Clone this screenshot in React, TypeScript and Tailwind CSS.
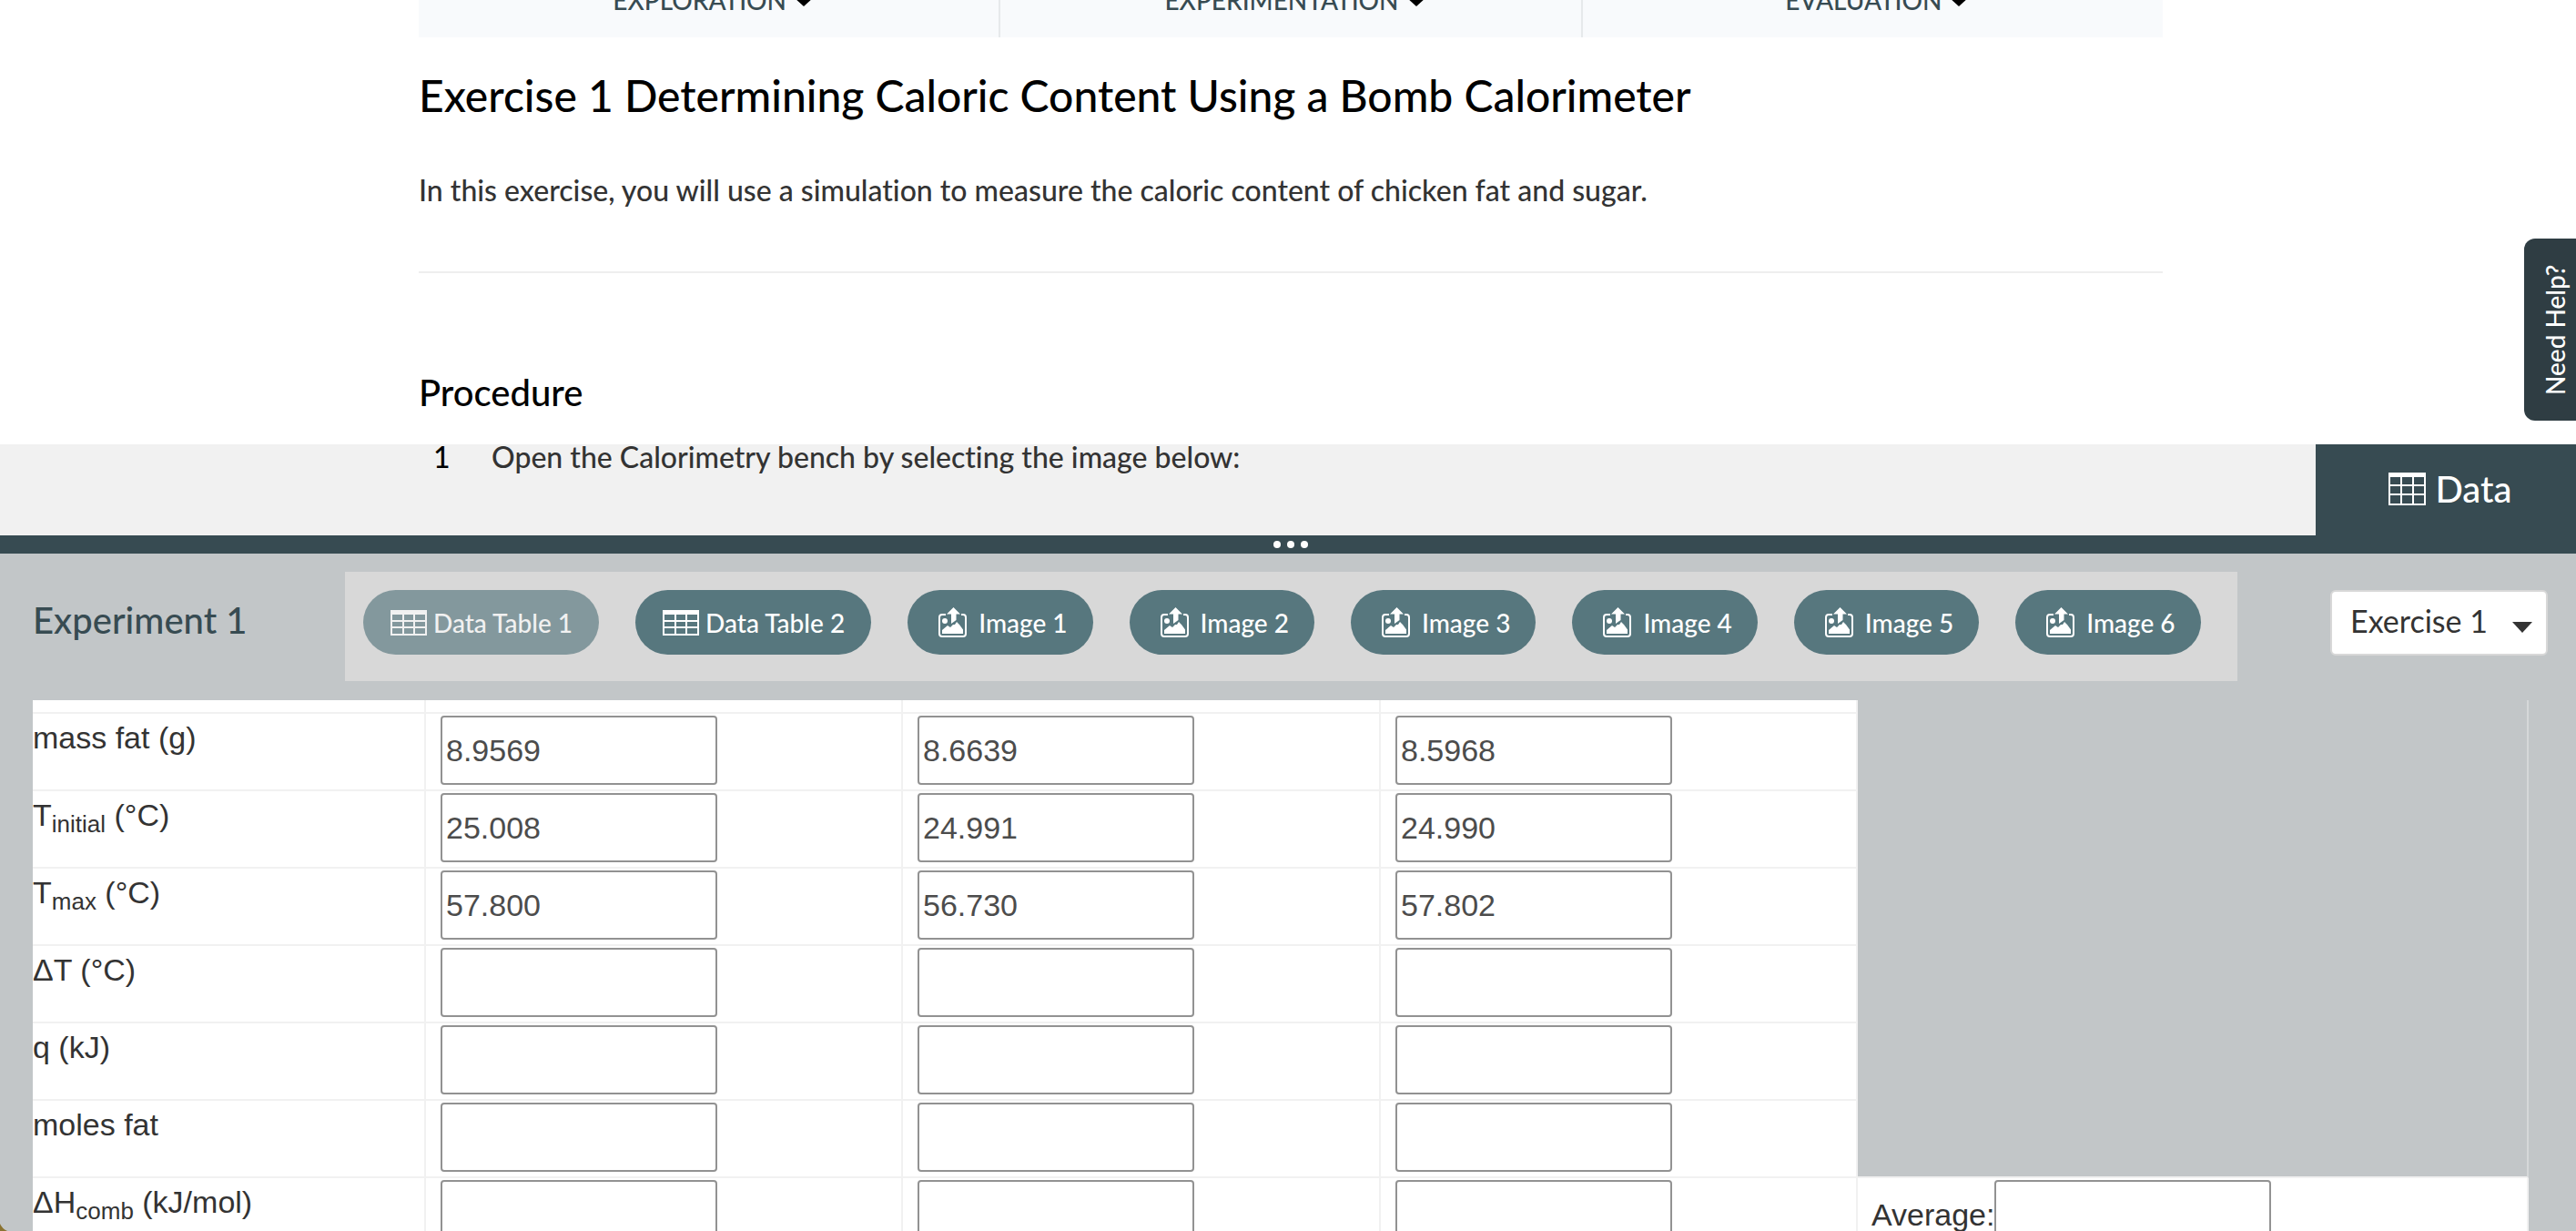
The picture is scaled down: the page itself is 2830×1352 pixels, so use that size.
import { useState } from "react";

const stages = ["EXPLORATION", "EXPERIMENTATION", "EVALUATION"];

const tabs = [
  { label: "Data Table 1", kind: "table" },
  { label: "Data Table 2", kind: "table" },
  { label: "Image 1", kind: "image" },
  { label: "Image 2", kind: "image" },
  { label: "Image 3", kind: "image" },
  { label: "Image 4", kind: "image" },
  { label: "Image 5", kind: "image" },
  { label: "Image 6", kind: "image" },
];

const rows = [
  { id: "mass", label: "mass fat (g)", values: ["8.9569", "8.6639", "8.5968"] },
  { id: "tinitial", label: <>T<Sub>initial</Sub> (°C)</>, values: ["25.008", "24.991", "24.990"] },
  { id: "tmax", label: <>T<Sub>max</Sub> (°C)</>, values: ["57.800", "56.730", "57.802"] },
  { id: "dt", label: "ΔT (°C)", values: ["", "", ""] },
  { id: "q", label: "q (kJ)", values: ["", "", ""] },
  { id: "moles", label: "moles fat", values: ["", "", ""] },
  { id: "dh", label: <>ΔH<Sub>comb</Sub> (kJ/mol)</>, values: ["", "", ""] },
];

function Sub({ children }: { children: string }) {
  return <sub className="text-[26px]">{children}</sub>;
}

const Caret = ({ className }: { className: string }) => (
  <svg viewBox="0 0 22 12" preserveAspectRatio="none" className={className} fill="currentColor" aria-hidden="true">
    <path d="M0 0h22L11 12z" />
  </svg>
);

const TableIcon = () => (
  <svg viewBox="0 0 40 28" className="h-7 w-10" fill="none" stroke="currentColor" strokeWidth="2" aria-hidden="true">
    <path d="M1 3h38v24H1zM1 12h38M1 19h38M14 4v23M26 4v23" />
    <path d="M0 2.5h40" strokeWidth="5" />
  </svg>
);

const DataIcon = () => (
  <svg viewBox="0 0 41 36" className="h-9 w-[41px]" fill="none" stroke="currentColor" strokeWidth="2" aria-hidden="true">
    <path d="M1 3h39v32H1zM1 14h39M1 24h39M14 4v31M27 4v31" />
    <path d="M0 2.5h41" strokeWidth="5" />
  </svg>
);

const ImageIcon = () => (
  <svg viewBox="0 0 32 34" className="h-[34px] w-8" fill="currentColor" aria-hidden="true">
    <path
      d="M8 8H4a3 3 0 0 0-3 3v18a3 3 0 0 0 3 3h23a3 3 0 0 0 3-3V11a3 3 0 0 0-3-3h-2"
      fill="none"
      stroke="currentColor"
      strokeWidth="2"
    />
    <circle cx="7" cy="15" r="3" />
    <path d="M16.5 0L24 7.5h-4.5V14L14 18V7.500H9z" />
    <path d="M4 29v-4l6-5 3 2 3-3h2l2-3 3 3 4 5.5V29z" />
  </svg>
);

const Cell = ({ id, value, name }: { id: string; value: string; name: string }) => (
  <input
    type="text"
    id={id}
    aria-label={name}
    defaultValue={value}
    className="h-[76px] w-[304px] rounded-[4px] border-2 border-[#929292] bg-white px-1 text-[34px] text-[#4c4c4c] outline-none"
  />
);

const DataTable = () => (
  <table className="w-full table-fixed border-separate border-spacing-0 text-left font-['Liberation_Sans',sans-serif] text-[34px] leading-12 text-[#333]">
    <colgroup>
      <col className="w-[432px]" />
      <col className="w-[524px]" />
      <col className="w-[525px]" />
      <col className="w-[524px]" />
      <col />
    </colgroup>
    <tbody>
      <tr className="h-[15px]">
        {[0, 1, 2, 3].map((n) => (
          <td key={n} className="border-r-2 border-b-2 border-[#f1f1f1] bg-white p-0" />
        ))}
        <td rowSpan={7} className="border-r-2 border-b-2 border-[#d5d8d9] border-b-[#f1f1f1] p-0" />
      </tr>
      {rows.map((row) => (
        <tr key={row.id} className="h-[85px]">
          <th scope="row" className="border-r-2 border-b-2 border-[#f1f1f1] bg-white px-0 py-0.5 align-top font-normal">
            {row.label}
          </th>
          {row.values.map((value, i) => (
            <td key={i} className="border-r-2 border-b-2 border-[#f1f1f1] bg-white py-0.5 pr-0 pl-4 align-top">
              <Cell id={`${row.id}-${i}`} value={value} name={`${row.id}, trial ${i + 1}`} />
            </td>
          ))}
          {row.id === "dh" && (
            <td className="border-r-2 border-b-2 border-[#f1f1f1] bg-white py-0.5 pr-0 pl-[15px] align-top whitespace-nowrap">
              <div className="flex items-center">
                <label htmlFor="average">Average:</label>
                <Cell id="average" value="" name="Average:" />
              </div>
            </td>
          )}
        </tr>
      ))}
    </tbody>
  </table>
);

export default function App() {
  const [active, setActive] = useState("Data Table 1");

  return (
    <div className="relative flex h-screen flex-col overflow-hidden bg-white font-['Lato',sans-serif] text-[#333] [font-variant-ligatures:none]">
      <main className="shrink-0 pr-[454px] pl-[460px]">
        <nav className="flex h-[41px] items-end overflow-hidden bg-[#f8fafc]">
          {stages.map((stage) => (
            <button
              key={stage}
              className="flex h-[82px] flex-1 items-center justify-center gap-2 border-r-2 border-[#e6e9eb] pl-2.5 text-[28px] font-medium text-[#374b52] last:border-r-0"
            >
              {stage}
              <Caret className="mt-1 h-2.5 w-[22px] text-black" />
            </button>
          ))}
        </nav>
        <h1 className="pt-[34px] text-[48px] leading-[60px] font-medium text-black">
          Exercise 1 Determining Caloric Content Using a Bomb Calorimeter
        </h1>
        <p className="mt-[50px] text-[32px] leading-[48px] font-medium">
          In this exercise, you will use a simulation to measure the caloric content of chicken fat and sugar.
        </p>
        <hr className="mt-[65px] border-t-2 border-[#eee]" />
        <h2 className="mt-[106px] pb-8 text-[40px] leading-[50px] font-medium text-black">Procedure</h2>
      </main>

      <section className="flex h-[100px] shrink-0 bg-[#f1f1f1]">
        <ol className="flex-1 pl-[460px] text-[32px] leading-7 font-medium">
          <li className="flex">
            <span className="w-20 pl-4 text-black">1</span>
            Open the Calorimetry bench by selecting the image below:
          </li>
        </ol>
        <button className="flex w-[286px] items-center justify-center gap-2.5 bg-[#374b52] pb-0.5 pl-2.5 text-[40px] font-medium text-white">
          <DataIcon />
          Data
        </button>
      </section>
      <div role="separator" className="flex h-5 shrink-0 items-center justify-center gap-[7px] bg-[#374b52] pl-1.5">
        <span className="size-2 rounded-full bg-white" />
        <span className="size-2 rounded-full bg-white" />
        <span className="size-2 rounded-full bg-white" />
      </div>

      <section className="flex min-h-0 flex-1 flex-col bg-[#c2c6c8]">
        <header className="flex pt-5 pr-[31px] pl-9">
          <h2 className="w-[343px] pt-7 text-[40px] leading-[50px] font-medium text-[#374b52]">Experiment 1</h2>
          <div className="flex h-[120px] gap-10 bg-[#d8d8d8] px-5 pt-5 pr-10">
            {tabs.map((tab) => (
              <button
                key={tab.label}
                onClick={() => setActive(tab.label)}
                className={`flex h-[71px] items-center rounded-full text-[28px] font-medium whitespace-nowrap text-white ${
                  tab.kind === "table" ? "gap-[7px] pr-[29px] pl-[30px]" : "gap-3 pr-7 pl-[34px]"
                } ${tab.label === active ? "bg-[#57777e] opacity-65" : "bg-[#57777e]"}`}
              >
                {tab.kind === "table" ? <TableIcon /> : <ImageIcon />}
                {tab.label}
              </button>
            ))}
          </div>
          <div className="relative mt-5 ml-auto h-[72px] w-[239px]">
            <select
              aria-label="Exercise"
              className="size-full appearance-none rounded-md border-2 border-[#d8d8d8] bg-white pb-1.5 pl-5 text-[34px] text-[#333] outline-none"
            >
              <option>Exercise 1</option>
            </select>
            <Caret className="pointer-events-none absolute top-[35px] right-[17px] h-3 w-[22px]" />
          </div>
        </header>
        <div className="mt-[21px] mr-[52px] ml-9 min-h-0 flex-1 overflow-hidden">
          <DataTable />
        </div>
      </section>

      <button className="absolute top-[262px] right-0 flex h-[200px] w-[57px] rotate-180 items-center justify-center rounded-r-xl bg-[#2f3d43] pr-2.5 text-[28px] font-medium text-white [writing-mode:vertical-rl]">
        Need Help?
      </button>
      <svg viewBox="0 0 8 8" className="absolute bottom-0 left-0 size-2" fill="#8a7331" aria-hidden="true">
        <path d="M0 0Q2 5 8 8H0z" />
      </svg>
    </div>
  );
}
